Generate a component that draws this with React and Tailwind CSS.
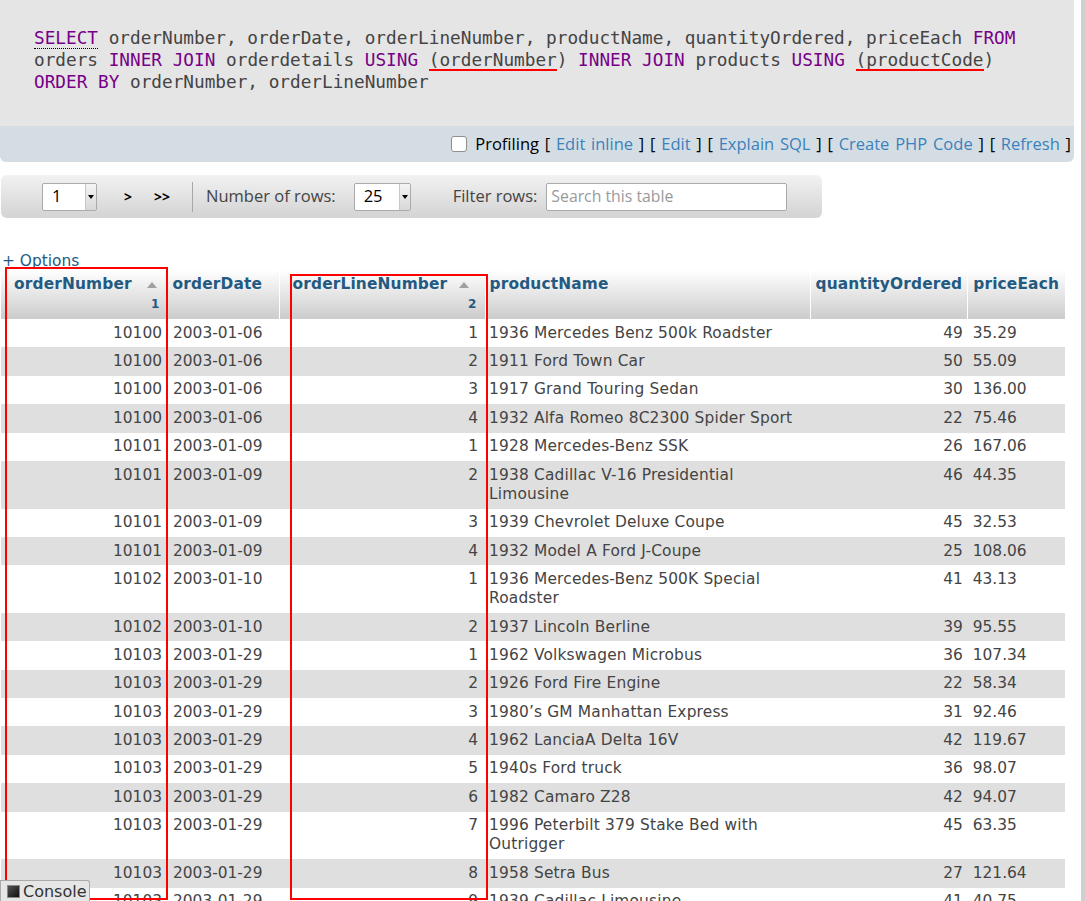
import React from "react";

const rows = [
  ["10100", "2003-01-06", "1", "1936 Mercedes Benz 500k Roadster", "49", "35.29"],
  ["10100", "2003-01-06", "2", "1911 Ford Town Car", "50", "55.09"],
  ["10100", "2003-01-06", "3", "1917 Grand Touring Sedan", "30", "136.00"],
  ["10100", "2003-01-06", "4", "1932 Alfa Romeo 8C2300 Spider Sport", "22", "75.46"],
  ["10101", "2003-01-09", "1", "1928 Mercedes-Benz SSK", "26", "167.06"],
  ["10101", "2003-01-09", "2", "1938 Cadillac V-16 Presidential Limousine", "46", "44.35"],
  ["10101", "2003-01-09", "3", "1939 Chevrolet Deluxe Coupe", "45", "32.53"],
  ["10101", "2003-01-09", "4", "1932 Model A Ford J-Coupe", "25", "108.06"],
  ["10102", "2003-01-10", "1", "1936 Mercedes-Benz 500K Special Roadster", "41", "43.13"],
  ["10102", "2003-01-10", "2", "1937 Lincoln Berline", "39", "95.55"],
  ["10103", "2003-01-29", "1", "1962 Volkswagen Microbus", "36", "107.34"],
  ["10103", "2003-01-29", "2", "1926 Ford Fire Engine", "22", "58.34"],
  ["10103", "2003-01-29", "3", "1980\u2019s GM Manhattan Express", "31", "92.46"],
  ["10103", "2003-01-29", "4", "1962 LanciaA Delta 16V", "42", "119.67"],
  ["10103", "2003-01-29", "5", "1940s Ford truck", "36", "98.07"],
  ["10103", "2003-01-29", "6", "1982 Camaro Z28", "42", "94.07"],
  ["10103", "2003-01-29", "7", "1996 Peterbilt 379 Stake Bed with Outrigger", "45", "63.35"],
  ["10103", "2003-01-29", "8", "1958 Setra Bus", "27", "121.64"],
  ["10103", "2003-01-29", "9", "1939 Cadillac Limousine", "41", "40.75"],
];

const Kw = ({ children, className = "" }) => (
  <span className={"text-[#770088] " + className}>{children}</span>
);

const RedUnder = ({ children }) => (
  <span className="relative">
    {children}
    <span className="absolute left-0 right-0 top-[19px] h-[2px] bg-[#ff0000]" />
  </span>
);

const DropArrow = () => (
  <div className="flex w-[11px] items-center justify-center border-l border-[#c8c8c8] bg-gradient-to-b from-[#f4f4f4] to-[#d8d8d8]">
    <div className="h-0 w-0 border-l-[3px] border-r-[3px] border-t-[4px] border-l-transparent border-r-transparent border-t-black" />
  </div>
);

const SortArrow = () => (
  <div className="h-0 w-0 border-l-[5px] border-r-[5px] border-b-[6px] border-l-transparent border-r-transparent border-b-[#a0a0a0]" />
);

export default function App() {
  return (
    <div className="relative h-[901px] w-[1085px] overflow-hidden bg-white font-['DejaVu_Sans',sans-serif] text-[15.4px] text-[#444]">
      <div className="flex">
        <div className="w-[1074px]">
          {/* SQL panel */}
          <div className="h-[126px] bg-[#e5e5e5] pl-[34px] pt-[27px] font-['DejaVu_Sans_Mono',monospace] text-[17.73px] leading-[22px] text-[#444]">
            <div className="whitespace-pre">
              <Kw className="border-b border-dotted border-black">SELECT</Kw>
              {" orderNumber, orderDate, orderLineNumber, productName, quantityOrdered, priceEach "}
              <Kw>FROM</Kw>
            </div>
            <div className="whitespace-pre">
              {"orders "}
              <Kw>INNER JOIN</Kw>
              {" orderdetails "}
              <Kw>USING</Kw>
              {" "}
              <RedUnder>(orderNumber</RedUnder>
              {") "}
              <Kw>INNER JOIN</Kw>
              {" products "}
              <Kw>USING</Kw>
              {" "}
              <RedUnder>(productCode</RedUnder>
              {")"}
            </div>
            <div className="whitespace-pre">
              <Kw>ORDER BY</Kw>
              {" orderNumber, orderLineNumber"}
            </div>
          </div>

          {/* Profiling bar */}
          <div className="flex h-[36px] items-center justify-end rounded-b-[6px] bg-[#d5dde4] pr-[3px] font-['Open_Sans',sans-serif] text-[16.5px] text-black">
            <div className="mr-[8px] h-[16px] w-[16px] rounded-[3px] border border-[#8f8f8f] bg-white" />
            <span className="whitespace-pre [word-spacing:1.5px]">
              {"Profiling [ "}
              <span className="text-[#3a82bd]">Edit inline</span>
              {" ] [ "}
              <span className="text-[#3a82bd]">Edit</span>
              {" ] [ "}
              <span className="text-[#3a82bd]">Explain SQL</span>
              {" ] [ "}
              <span className="text-[#3a82bd]">Create PHP Code</span>
              {" ] [ "}
              <span className="text-[#3a82bd]">Refresh</span>
              {" ]"}
            </span>
          </div>

          {/* Navigation bar */}
          <div className="ml-[1px] mt-[13px] flex h-[43px] w-[821px] items-center rounded-[6px] bg-gradient-to-b from-[#f2f2f2] to-[#d3d3d3] pl-[41px] font-['Open_Sans',sans-serif] text-[16.5px] text-[#444]">
            <div className="flex h-[28px] w-[55px] rounded-[2px] border border-[#aaa] bg-white">
              <div className="flex flex-1 items-center pl-[9px] text-black">1</div>
              <DropArrow />
            </div>
            <span className="ml-[27px] text-[14px] font-bold text-black">&gt;</span>
            <span className="ml-[22px] text-[14px] font-bold text-black">&gt;&gt;</span>
            <div className="ml-[22px] h-[30px] w-[1px] bg-[#a8a8a8]" />
            <span className="ml-[13px]">Number of rows:</span>
            <div className="ml-[18px] flex h-[28px] w-[57px] rounded-[2px] border border-[#aaa] bg-white">
              <div className="flex flex-1 items-center pl-[9px] text-black">25</div>
              <DropArrow />
            </div>
            <span className="ml-[42px]">Filter rows:</span>
            <div className="ml-[9px] flex h-[28px] w-[241px] items-center rounded-[2px] border border-[#aaa] bg-white pl-[4px] text-[15.8px] text-[#9a9a9a]">
              Search this table
            </div>
          </div>

          {/* Options */}
          <div className="ml-[2px] mt-[34px] leading-[19px] text-[#235a81]">+ Options</div>

          {/* Table */}
          <table className="ml-[1px] -mt-[1px] table-fixed border-collapse">
            <colgroup>
              <col className="w-[166px]" />
              <col className="w-[112px]" />
              <col className="w-[206px]" />
              <col className="w-[325px]" />
              <col className="w-[157px]" />
              <col className="w-[97px]" />
            </colgroup>
            <thead>
              <tr className="bg-gradient-to-b from-[#ffffff] to-[#cccccc] align-top font-bold leading-[19px] tracking-[0.15px] text-[#235a81]">
                <th className="border-r border-white pb-[5px] pl-[13px] pr-[7px] pt-[5px] text-left">
                  <div className="flex items-center justify-between pr-[3px]">
                    <span>orderNumber</span>
                    <SortArrow />
                  </div>
                  <div className="text-right text-[12px] leading-[20px]">1</div>
                </th>
                <th className="border-r border-white px-[5px] pt-[5px] text-left">orderDate</th>
                <th className="border-r border-white pb-[5px] pl-[13px] pr-[8px] pt-[5px] text-left">
                  <div className="flex items-center justify-between pr-[8px]">
                    <span>orderLineNumber</span>
                    <SortArrow />
                  </div>
                  <div className="text-right text-[12px] leading-[20px]">2</div>
                </th>
                <th className="border-r border-white px-[4px] pt-[5px] text-left">productName</th>
                <th className="border-r border-white px-[5px] pt-[5px] text-left">quantityOrdered</th>
                <th className="px-[5px] pt-[5px] text-left">priceEach</th>
              </tr>
            </thead>
            <tbody>
              {rows.map((r, i) => (
                <tr key={i} className={(i % 2 === 1 ? "bg-[#dfdfdf] " : "bg-white ") + "align-top leading-[19.2px]"}>
                  <td className="py-[4.6px] pr-[5px] text-right">{r[0]}</td>
                  <td className="py-[4.6px] pl-[6px]">{r[1]}</td>
                  <td className="py-[4.6px] pr-[7px] text-right">{r[2]}</td>
                  <td className="py-[4.6px] pl-[4px] pr-[4px] tracking-[0.18px]">{r[3]}</td>
                  <td className="py-[4.6px] pr-[5px] text-right">{r[4]}</td>
                  <td className="py-[4.6px] pl-[5px]">{r[5]}</td>
                </tr>
              ))}
            </tbody>
          </table>
        </div>
        <div className="flex-1" />
        <div className="h-[901px] w-[4px] bg-[#cfcfcf]" />
      </div>

      {/* Red annotation boxes */}
      <div className="pointer-events-none absolute left-[5px] top-[267px] h-[633px] w-[163px] border-2 border-[#ff0000]" />
      <div className="pointer-events-none absolute left-[290px] top-[274px] h-[626px] w-[198px] border-2 border-[#ff0000]" />

      {/* Console tab */}
      <div className="absolute bottom-0 left-0 flex h-[21px] w-[90px] items-center rounded-tr-[3px] border border-b-0 border-[#aaa] bg-[#e6e6e6] pl-[6px] text-[16px] leading-[19px] text-[#333]">
        <div className="mr-[3px] h-[13px] w-[13px] border border-[#888] bg-gradient-to-br from-[#555] to-[#111]" />
        Console
      </div>
    </div>
  );
}
